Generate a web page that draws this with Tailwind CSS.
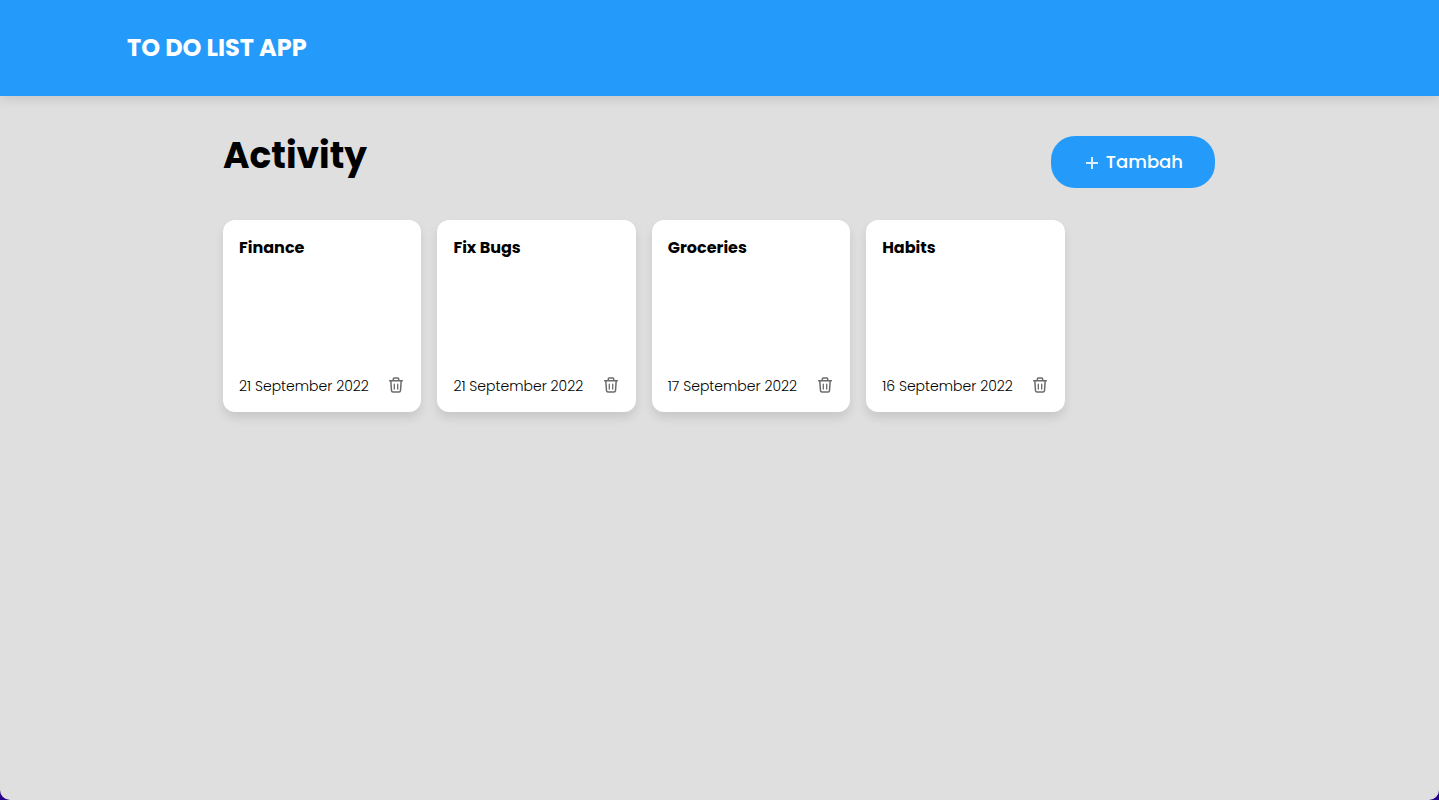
<!DOCTYPE html>
<html lang="id">
<head>
<meta charset="utf-8">
<meta name="viewport" content="width=device-width, initial-scale=1">
<title>To Do List App</title>
<script src="https://cdn.jsdelivr.net/npm/@tailwindcss/browser@4"></script>
</head>
<body class="bg-[#26008a] font-['Poppins','Inter',sans-serif] text-black">
<svg class="hidden" aria-hidden="true">
  <symbol id="trash" viewBox="0 0 16 18">
    <g fill="none" stroke="currentColor" stroke-width="1.5" stroke-linecap="round" stroke-linejoin="round">
      <path d="M1.600 3.800h12.800M5.300 3.800V2c0-.6.3-.9.9-.9h3.600c.6 0 .9.3.9.9v1.800M2.800 3.800l.7 9.800c.1.900.6 1.400 1.500 1.400h6c.9 0 1.400-.5 1.500-1.400l.7-9.800"/>
      <path stroke-width="1.300" d="M6.300 7.200v4.800M9.700 7.200v4.800"/>
    </g>
  </symbol>
</svg>
<div class="min-h-screen rounded-b-[10px] bg-[#dfdfdf]">
  <header class="bg-[#249bfb] shadow-[0_4px_10px_rgba(0,0,0,0.1)]">
    <div class="mx-auto flex h-24 max-w-[1281px] items-center px-12">
      <h1 class="text-2xl font-bold text-white">TO DO LIST APP</h1>
    </div>
  </header>
  <main class="mx-auto max-w-[1281px] pt-10 pr-[145px] pl-36">
    <div class="flex items-start justify-between">
      <h2 class="text-4xl font-bold">Activity</h2>
      <button type="button" class="flex h-13 w-41 items-center justify-end gap-2 rounded-3xl bg-[#249bfb] px-8 text-lg font-medium text-white">
        <svg class="mt-0.5 size-3" viewBox="0 0 12 12" aria-hidden="true"><path d="M6 0v12M0 6h12" fill="none" stroke="#def0ff" stroke-width="2"/></svg>
        <span>Tambah</span>
      </button>
    </div>
    <div class="mt-8 flex flex-wrap gap-4">
      <article class="flex h-48 w-1/5 flex-col justify-between rounded-xl bg-white p-4 shadow-[0_6px_10px_rgba(0,0,0,0.1)]">
        <h3 class="font-bold">Finance</h3>
        <div class="flex items-center justify-between"><time class="text-sm font-light" datetime="2022-09-21">21 September 2022</time><button type="button" aria-label="Hapus Finance" class="mr-px text-[#6b6b6b]"><svg class="h-4.5 w-4"><use href="#trash"/></svg></button></div>
      </article>
      <article class="flex h-48 w-1/5 flex-col justify-between rounded-xl bg-white p-4 shadow-[0_6px_10px_rgba(0,0,0,0.1)]">
        <h3 class="font-bold">Fix Bugs</h3>
        <div class="flex items-center justify-between"><time class="text-sm font-light" datetime="2022-09-21">21 September 2022</time><button type="button" aria-label="Hapus Fix Bugs" class="mr-px text-[#6b6b6b]"><svg class="h-4.5 w-4"><use href="#trash"/></svg></button></div>
      </article>
      <article class="flex h-48 w-1/5 flex-col justify-between rounded-xl bg-white p-4 shadow-[0_6px_10px_rgba(0,0,0,0.1)]">
        <h3 class="font-bold">Groceries</h3>
        <div class="flex items-center justify-between"><time class="text-sm font-light" datetime="2022-09-17">17 September 2022</time><button type="button" aria-label="Hapus Groceries" class="mr-px text-[#6b6b6b]"><svg class="h-4.5 w-4"><use href="#trash"/></svg></button></div>
      </article>
      <article class="flex h-48 w-1/5 flex-col justify-between rounded-xl bg-white p-4 shadow-[0_6px_10px_rgba(0,0,0,0.1)]">
        <h3 class="font-bold">Habits</h3>
        <div class="flex items-center justify-between"><time class="text-sm font-light" datetime="2022-09-16">16 September 2022</time><button type="button" aria-label="Hapus Habits" class="mr-px text-[#6b6b6b]"><svg class="h-4.5 w-4"><use href="#trash"/></svg></button></div>
      </article>
    </div>
  </main>
</div>
</body>
</html>
